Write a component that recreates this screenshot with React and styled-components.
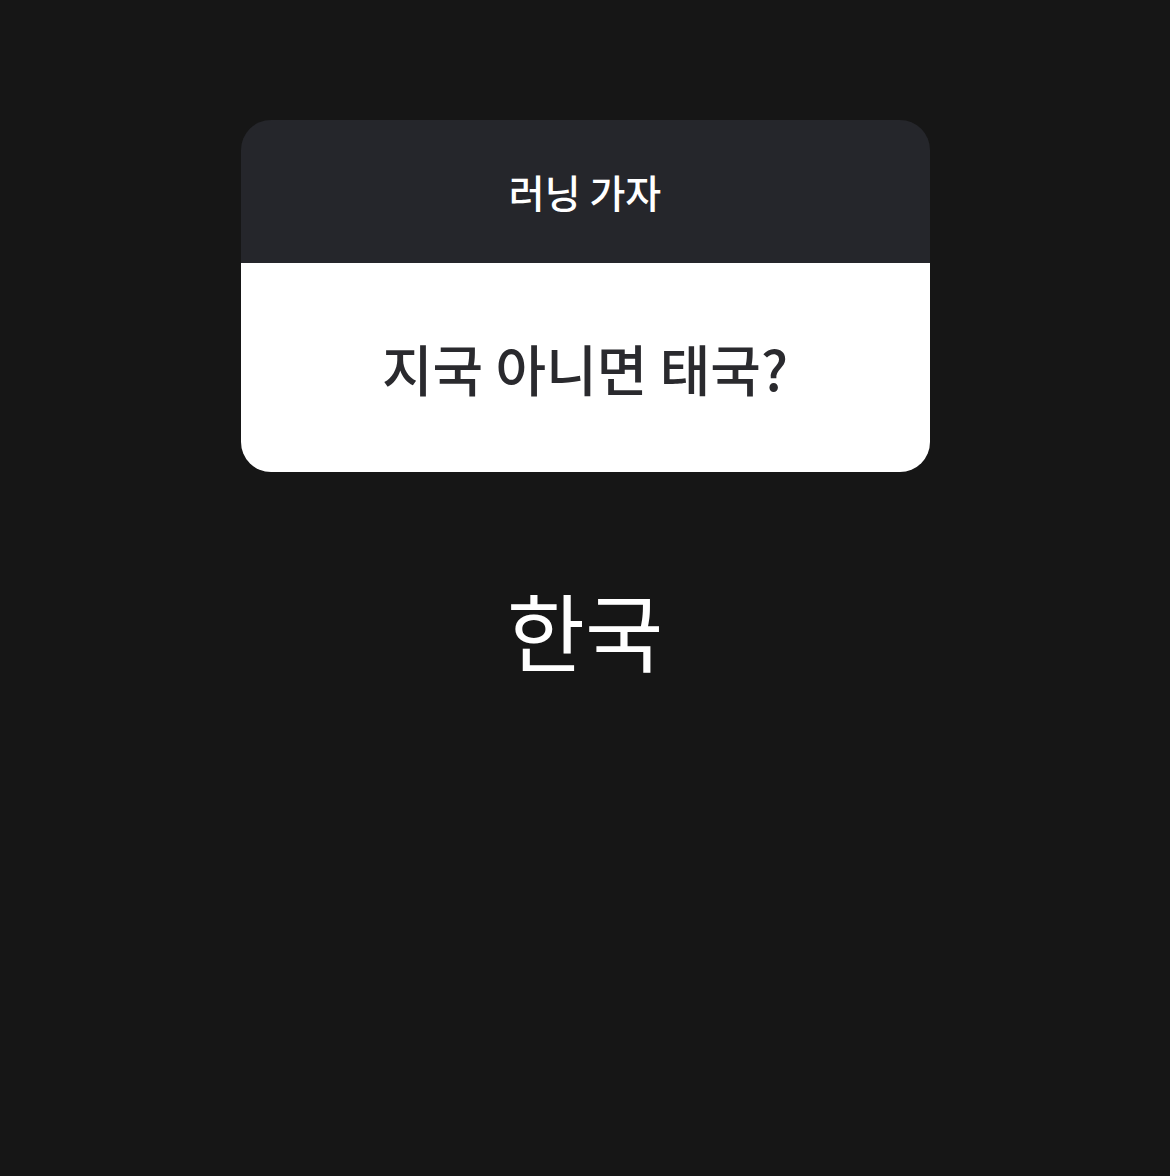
import React from 'react';
import styled, { createGlobalStyle } from 'styled-components';

const GlobalStyle = createGlobalStyle`
  html, body {
    margin: 0;
    padding: 0;
    background: #161616;
  }
  body {
    font-family: "Noto Sans CJK KR", "Noto Sans", sans-serif;
  }
`

const Page = styled.div`
  width: 1170px;
  height: 1176px;
  background: #161616;
  display: flex;
  flex-direction: column;
  align-items: center;
  padding-top: 120px;
  box-sizing: border-box;
`

const Card = styled.div`
  width: 689px;
  border-radius: 30px;
  overflow: hidden;
  display: flex;
  flex-direction: column;
`

const Header = styled.div`
  height: 143px;
  background: #25262b;
  display: flex;
  align-items: center;
  justify-content: center;
  color: #ffffff;
  font-size: 39px;
  font-weight: 500;
  line-height: 1;
`

const Body = styled.div`
  height: 209px;
  background: #ffffff;
  display: flex;
  align-items: center;
  justify-content: center;
  color: #2a2a2e;
  font-size: 55px;
  font-weight: 500;
  line-height: 1;
`

const Answer = styled.div`
  margin-top: 106px;
  color: #ffffff;
  font-size: 85px;
  font-weight: 400;
  line-height: 1.2;
`

const App = () => {
  return (
    <>
      <GlobalStyle />
      <Page>
        <Card>
          <Header>러닝 가자</Header>
          <Body>지국 아니면 태국?</Body>
        </Card>
        <Answer>한국</Answer>
      </Page>
    </>
  )
}

export default App;
